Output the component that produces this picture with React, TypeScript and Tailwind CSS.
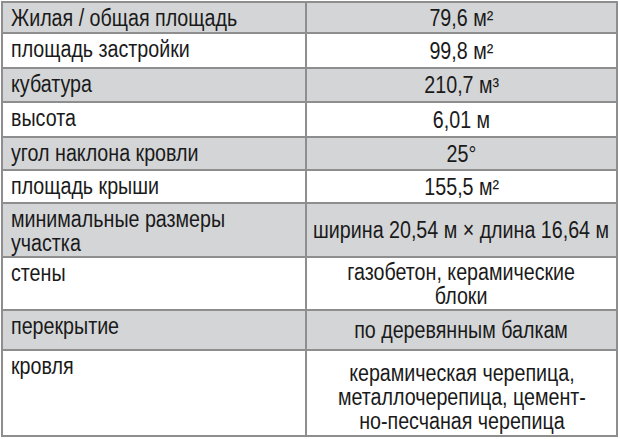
const rows: { label: React.ReactNode; value: React.ReactNode; h: string; gray: boolean; vpad?: string }[] = [
  { label: "Жилая / общая площадь", value: "79,6 м²", h: "h-[31px]", gray: true },
  { label: "площадь застройки", value: "99,8 м²", h: "h-[35px]", gray: false },
  { label: "кубатура", value: "210,7 м³", h: "h-[34px]", gray: true },
  { label: "высота", value: "6,01 м", h: "h-[35px]", gray: false },
  { label: "угол наклона кровли", value: "25°", h: "h-[33px]", gray: true },
  { label: "площадь крыши", value: "155,5 м²", h: "h-[33px]", gray: false },
  {
    label: (
      <>
        минимальные размеры
        <br />
        участка
      </>
    ),
    value: "ширина 20,54 м × длина 16,64 м",
    h: "h-[54px]",
    gray: true,
  },
  {
    label: "стены",
    value: (
      <>
        газобетон, керамические
        <br />
        блоки
      </>
    ),
    h: "h-[53px]",
    gray: false,
  },
  { label: "перекрытие", value: "по деревянным балкам", h: "h-[40px]", gray: true },
  {
    label: "кровля",
    value: (
      <>
        керамическая черепица,
        <br />
        металлочерепица, цемент-
        <br />
        но-песчаная черепица
      </>
    ),
    h: "h-[84px]",
    gray: false,
    vpad: "pt-[8px]",
  },
]

export default function App() {
  return (
    <div className="w-[620px] h-[439px] bg-white pt-[1px] pl-[1px]" style={{ fontFamily: '"Liberation Sans", Arial, sans-serif' }}>
      <div className="w-[617px] border-2 border-[#8e8e8e] text-[23px] leading-[24px] text-[#1a1a1a]">
        {rows.map((row, i) => (
          <div
            key={i}
            className={`grid grid-cols-[304px_minmax(0,1fr)] ${row.h} ${i < rows.length - 1 ? "border-b-2 border-[#8e8e8e]" : ""} ${
              row.gray ? "bg-[#d4d5d7]" : "bg-white"
            }`}
          >
            <div className="border-r-2 border-[#8e8e8e] pl-[8px] pt-[3px]">
              <span className="inline-block origin-left scale-x-[0.855] whitespace-nowrap">{row.label}</span>
            </div>
            <div className={`flex min-w-0 items-center justify-center text-center ${row.vpad ?? ""}`}>
              <span className="inline-block shrink-0 origin-center scale-x-[0.855] whitespace-nowrap">{row.value}</span>
            </div>
          </div>
        ))}
      </div>
    </div>
  )
}
